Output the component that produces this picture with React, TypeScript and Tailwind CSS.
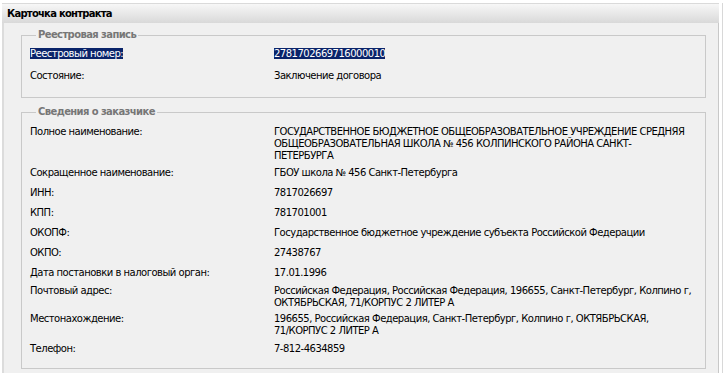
const rowsCustomer: { label: string; value: string[] }[] = [
  {
    label: "Полное наименование:",
    value: [
      "ГОСУДАРСТВЕННОЕ БЮДЖЕТНОЕ ОБЩЕОБРАЗОВАТЕЛЬНОЕ УЧРЕЖДЕНИЕ СРЕДНЯЯ",
      "ОБЩЕОБРАЗОВАТЕЛЬНАЯ ШКОЛА № 456 КОЛПИНСКОГО РАЙОНА САНКТ-",
      "ПЕТЕРБУРГА",
    ],
  },
  { label: "Сокращенное наименование:", value: ["ГБОУ школа № 456 Санкт-Петербурга"] },
  { label: "ИНН:", value: ["7817026697"] },
  { label: "КПП:", value: ["781701001"] },
  {
    label: "ОКОПФ:",
    value: ["Государственное бюджетное учреждение субъекта Российской Федерации"],
  },
  { label: "ОКПО:", value: ["27438767"] },
  { label: "Дата постановки в налоговый орган:", value: ["17.01.1996"] },
  {
    label: "Почтовый адрес:",
    value: [
      "Российская Федерация, Российская Федерация, 196655, Санкт-Петербург, Колпино г,",
      "ОКТЯБРЬСКАЯ, 71/КОРПУС 2 ЛИТЕР А",
    ],
  },
  {
    label: "Местонахождение:",
    value: [
      "196655, Российская Федерация, Санкт-Петербург, Колпино г, ОКТЯБРЬСКАЯ,",
      "71/КОРПУС 2 ЛИТЕР А",
    ],
  },
  { label: "Телефон:", value: ["7-812-4634859"] },
];

function Row({ label, value }: { label: string; value: string[] }) {
  // single-line rows are 20px, wrapped ones sit a bit tighter
  const pad =
    value.length > 2 ? "py-[1px]" : value.length > 1 ? "py-[2px]" : "py-[4px]";
  return (
    <div className={`flex ${pad}`}>
      <div className="w-[244px] shrink-0">{label}</div>
      <div className="whitespace-nowrap">
        {value.map((line) => (
          <div key={line}>{line}</div>
        ))}
      </div>
    </div>
  );
}

export default function App() {
  return (
    <div className="w-[727px] h-[373px] bg-white overflow-hidden font-['DejaVu_Sans',sans-serif] text-[10px] leading-[12px] tracking-[-0.5px] text-black">
      <div className="ml-[2px] mt-[3px] w-[721px] h-[370px] border-r border-[#d8d8d8] pr-[3px] flex flex-col">
        <div className="h-[20px] shrink-0 border-t border-[#dadada] bg-gradient-to-b from-[#f7f7f7] to-[#d9d9d9] flex items-center pl-[5px] font-bold text-[10px] tracking-[-0.75px]">
          Карточка контракта
        </div>
        <div className="flex-1 bg-[#f0f0f0] border-l-[2px] border-r border-l-[#dcdcdc] border-r-[#c8c8c8] pl-[17px] pr-[12px] pt-[6px]">
          <fieldset className="border border-[#c9c9c9] pl-[8px] pb-[10px]">
            <legend className="ml-[6px] px-[2px] font-bold text-[#777777] tracking-[-0.6px]">
              Реестровая запись
            </legend>
            <div className="flex py-[5px] mt-[2px]">
              <div className="w-[244px] shrink-0">
                <span className="bg-[#0a246a] text-white">Реестровый номер:</span>
              </div>
              <div>
                <span className="bg-[#0a246a] text-white">2781702669716000010</span>
              </div>
            </div>
            <div className="flex py-[5px]">
              <div className="w-[244px] shrink-0">Состояние:</div>
              <div>Заключение договора</div>
            </div>
          </fieldset>
          <fieldset className="mt-[8px] border border-[#c9c9c9] pl-[8px] pb-[9px]">
            <legend className="ml-[6px] px-[2px] font-bold text-[#777777] tracking-[-0.6px]">
              Сведения о заказчике
            </legend>
            <div className="mt-[7px]">
              {rowsCustomer.map((r) => (
                <Row key={r.label} label={r.label} value={r.value} />
              ))}
            </div>
          </fieldset>
        </div>
      </div>
    </div>
  );
}
